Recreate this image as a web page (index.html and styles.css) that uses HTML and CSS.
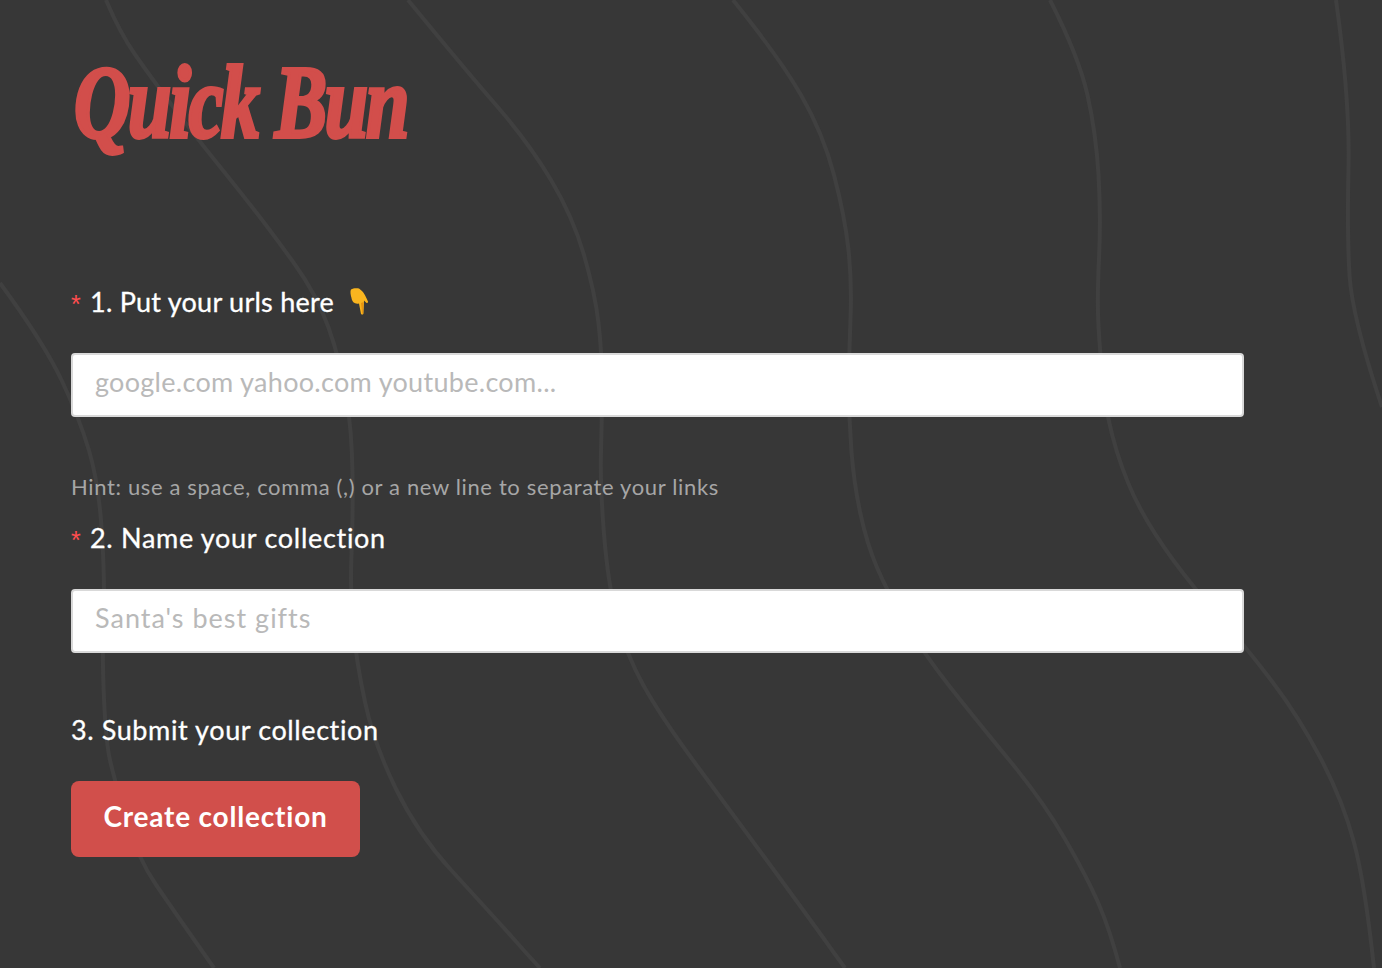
FILE: index.html
```html
<!DOCTYPE html>
<html lang="en">
<head>
<meta charset="utf-8">
<title>Quick Bun</title>
<link rel="stylesheet" href="styles.css">
</head>
<body>
<svg class="waves" viewBox="0 0 1382 968" aria-hidden="true">
<path d="M106 0Q120 33 135 54.5Q150 76 171 104Q192 132 213 158Q234 184 252 207Q270 230 293.5 262.5Q317 295 328.5 327.5Q340 360 346 395Q352 430 352.5 475Q353 520 351.5 555Q350 590 353 625Q356 660 365 702Q374 744 396 789Q418 834 451.5 870.5Q485 907 512 937Q525 952 540 968"/>
<path d="M408 0Q463 67 496 105Q529 143 551 180Q573 217 584 255Q595 293 598.5 323Q602 353 602 386.5Q602 420 601 452Q600 484 604 534Q608 584 617 619Q626 654 643.5 685.5Q661 717 698 767Q735 817 768 862Q801 907 823 937.5Q834 953 845 968"/>
<path d="M733 0Q779 57 801 95Q823 133 834 175Q845 217 848.5 250Q852 283 850.5 318Q849 353 849 386.5Q849 420 851.5 452Q854 484 860.5 514Q867 544 877 567.5Q887 591 905.5 622.5Q924 654 950.5 687.5Q977 721 1010 761Q1043 801 1065 839Q1087 877 1098.5 903.5Q1110 930 1120 968"/>
<path d="M1050 0Q1079 57 1087.5 95Q1096 133 1098.5 175Q1101 217 1099 258.5Q1097 300 1098.5 326.5Q1100 353 1103.5 386.5Q1107 420 1117 452Q1127 484 1140.5 509Q1154 534 1173.5 560.5Q1193 587 1219.5 617Q1246 647 1272.5 682Q1299 717 1321 759Q1343 801 1354 842.5Q1365 884 1374 968"/>
<path d="M1336 0Q1350 100 1348.5 166.5Q1347 233 1349.5 275Q1352 317 1382 407"/>
<path d="M0 283Q44 343 61.5 380Q79 417 89 450.5Q99 484 102 534Q105 584 103.5 619Q102 654 104 699Q106 744 110.5 762.5Q115 781 126 819Q137 857 156.5 885.5Q176 914 214 968"/>
</svg>
<main class="page">
  <h1 class="logo"><span class="logo-text">Quick Bun</span></h1>
  <form class="form">
    <label class="label label-first"><span class="req">*</span><span>1. Put your urls here</span><svg class="emoji" viewBox="0 0 19 27" aria-hidden="true"><path fill="#f9b51f" d="M1 1.500C3 0 7 0 9 .5L12 3C14 5 16 9 18 13.500C18.500 15 16.500 15.500 15.500 14L14 12.500L13.500 25C13.500 27 11 27 10.800 25L9 15.500C5 16.500 2 14 1.500 10C.5 7 0 3 1 1.500Z"/><path fill="#e8940f" d="M11 15L12.200 25.500C12.300 26 12.800 26 12.900 25.500L13.500 14Z"/></svg></label>
    <input class="input" type="text" placeholder="google.com yahoo.com youtube.com...">
    <p class="hint">Hint: use a space, comma (,) or a new line to separate your links</p>
    <label class="label label-second"><span class="req">*</span><span>2. Name your collection</span></label>
    <input class="input input-name" type="text" placeholder="Santa's best gifts">
    <label class="label label-third">3. Submit your collection</label>
    <button class="button" type="button">Create collection</button>
  </form>
</main>
</body>
</html>
```
FILE: styles.css
```css
* { box-sizing: border-box; }
html, body { margin: 0; height: 100%; }
body {
  position: relative;
  height: 968px;
  overflow: hidden;
  background: #373737;
  font-family: "Lato", "Liberation Sans", sans-serif;
  font-variant-ligatures: none;
  color: #fff;
}
.waves {
  position: absolute;
  inset: 0;
  width: 1382px;
  height: 968px;
  fill: none;
  stroke: #404040;
  stroke-width: 4;
}
.page {
  position: relative;
  padding: 44px 138px 0 71px;
}
.logo {
  margin: 0;
  height: 116px;
  padding-left: 3px;
  font-family: "Liberation Serif", serif;
  font-style: italic;
  font-weight: 700;
  font-size: 104px;
  line-height: 116px;
  letter-spacing: -3px;
  color: #d24e4b;
  -webkit-text-stroke: 4px #d24e4b;
}
.logo-text {
  display: inline-block;
  white-space: nowrap;
  transform: scaleX(0.75);
  transform-origin: left center;
}
.form { display: flex; flex-direction: column; align-items: flex-start; }
.label {
  display: flex;
  align-items: center;
  height: 36px;
  padding-bottom: 3px;
  font-size: 27px;
  -webkit-text-stroke: 0.3px #fff;
}
.label-first { margin-top: 125px; margin-bottom: 32px; letter-spacing: 0.25px; }
.label-second { margin-top: 16px; margin-bottom: 32px; letter-spacing: 0.7px; }
.label-third { margin-top: 60px; margin-bottom: 32px; letter-spacing: 0.6px; }
.req {
  width: 19px;
  padding-top: 5px;
  color: #ff4d4f;
  font-size: 25px;
  font-family: "Liberation Sans", sans-serif;
  -webkit-text-stroke: 0;
}
.emoji { width: 19px; height: 27px; margin: 0 0 0 16px; }
.input {
  width: 1173px;
  height: 64px;
  padding: 0 22px 7px;
  background: #fff;
  border: 2px solid #d9d9d9;
  border-radius: 4px;
  font-family: "Lato", sans-serif;
  font-size: 27px;
  font-variant-ligatures: none;
  letter-spacing: 0.3px;
  color: #333;
}
.input-name { letter-spacing: 1px; }
.input::placeholder { color: #b9b9b9; opacity: 1; }
.hint {
  margin: 52px 0 0;
  height: 36px;
  line-height: 36px;
  font-size: 22px;
  letter-spacing: 0.64px;
  color: #a6a6a6;
}
.button {
  width: 289px;
  height: 76px;
  padding: 0 0 6px;
  border: 0;
  border-radius: 8px;
  background: #d14f4b;
  color: #fff;
  font-family: "Lato", sans-serif;
  font-size: 28px;
  font-weight: 700;
  font-variant-ligatures: none;
  letter-spacing: 0.8px;
}
```
